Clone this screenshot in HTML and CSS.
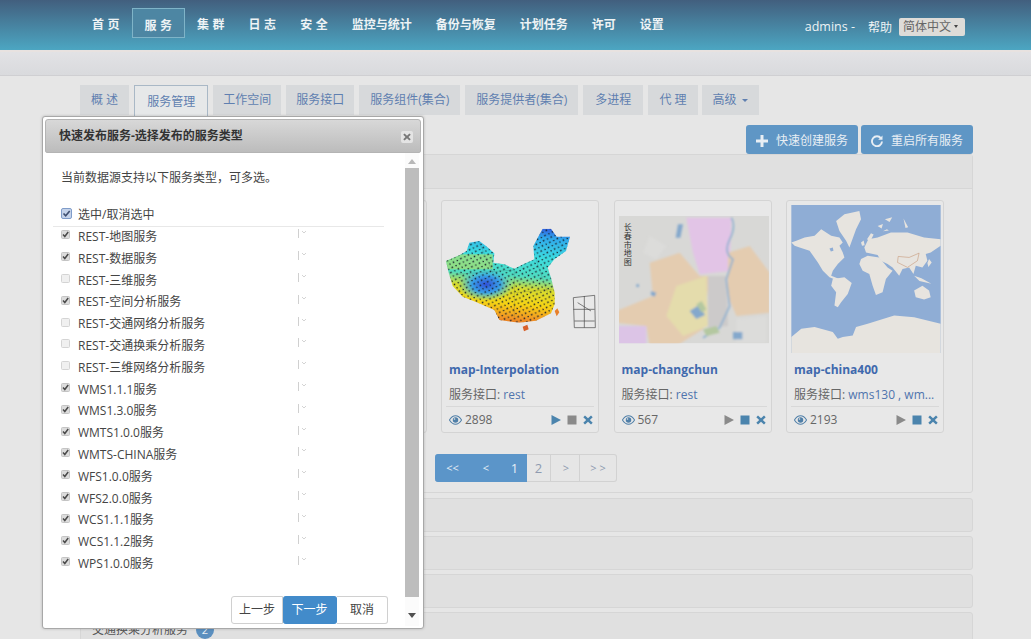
FILE: index.html
```html
<!DOCTYPE html>
<html lang="zh-CN">
<head>
<meta charset="utf-8">
<title>服务管理</title>
<link rel="stylesheet" href="styles.css">
</head>
<body>
<svg class="sprites" width="0" height="0">
  <defs>
    <symbol id="eye" viewBox="0 0 16 12"><path d="M.5 6C3 2 5.400.8 8 .8S13 2 15.500 6C13 10 10.600 11.200 8 11.200S3 10 .5 6z" fill="none" stroke="currentColor" stroke-width="1.300"/><circle cx="8" cy="6" r="3.400" fill="currentColor"/><circle cx="6.800" cy="4.800" r="1" fill="#e6e6e6"/></symbol>
    <symbol id="play" viewBox="0 0 10 10"><path d="M.5 0L10 5 .5 10z" fill="currentColor"/></symbol>
    <symbol id="stop" viewBox="0 0 10 10"><rect width="9" height="9" x=".5" y=".5" fill="currentColor"/></symbol>
    <symbol id="del" viewBox="0 0 10 10"><path d="M2 .5L5 3.300 8 .5 9.700 2.200 6.800 5 9.700 7.800 8 9.500 5 6.700 2 9.500.3 7.800 3.200 5 .3 2.200z" fill="currentColor"/></symbol>
    <symbol id="on" viewBox="0 0 9 9"><rect x=".5" y=".5" width="8" height="8" rx="1" fill="#dcdcdc" stroke="#c4c4c4"/><path d="M2 4.500l1.800 2L7.200 2" fill="none" stroke="#4a4a4a" stroke-width="1.500"/></symbol>
    <symbol id="off" viewBox="0 0 9 9"><rect x=".5" y=".5" width="8" height="8" rx="1" fill="#f0f0f0" stroke="#d4d4d4"/></symbol>
    <symbol id="mark" viewBox="0 0 10 9"><path d="M.5 0v9" stroke="#d0d0d0"/><path d="M4 2l2 2 2-2" fill="none" stroke="#d4d4d4"/></symbol>
    <pattern id="dots" width="19" height="16" patternUnits="userSpaceOnUse" patternTransform="rotate(14)"><circle cx="4" cy="4" r="2.500" fill="#18202a"/><circle cx="14" cy="12" r="2.300" fill="#18202a"/></pattern>
    <linearGradient id="heat" x1=".6" y1="0" x2=".5" y2="1"><stop offset="0" stop-color="#3058e0"/><stop offset=".1" stop-color="#30a8ec"/><stop offset=".3" stop-color="#3cdce0"/><stop offset=".5" stop-color="#50dcc0"/><stop offset=".62" stop-color="#d6dc30"/><stop offset=".78" stop-color="#f6d414"/><stop offset=".92" stop-color="#f29424"/><stop offset="1" stop-color="#e06a24"/></linearGradient>
    <radialGradient id="cold"><stop offset="0" stop-color="#3050d8"/><stop offset=".5" stop-color="#38a0e8"/><stop offset="1" stop-color="#40d8d8" stop-opacity="0"/></radialGradient>
    <clipPath id="cn"><path d="M30 195L70 178 92 165 100 140 130 135 150 150 175 172 172 200 205 205 235 218 262 205 295 190 292 150 305 125 320 98 345 98 362 122 402 122 390 165 355 190 335 215 345 245 356 290 356 325 345 352 300 374 250 380 190 372 175 342 120 318 80 302 50 270 38 230z"/></clipPath>
    <filter id="soft"><feGaussianBlur stdDeviation="3"/></filter>
  </defs>
</svg>

<header class="topbar">
  <nav class="mainnav">
    <a class="navitem">首 页</a>
    <a class="navitem navitem-on">服 务</a>
    <a class="navitem">集 群</a>
    <a class="navitem">日 志</a>
    <a class="navitem">安 全</a>
    <a class="navitem">监控与统计</a>
    <a class="navitem">备份与恢复</a>
    <a class="navitem">计划任务</a>
    <a class="navitem">许可</a>
    <a class="navitem">设置</a>
  </nav>
  <div class="usertools">
    <span class="username">admins -</span>
    <span class="help">帮助</span>
    <span class="langselect">简体中文<i class="langcaret"></i></span>
  </div>
</header>
<div class="subbar"></div>

<main class="content">
  <ul class="tabs">
    <li class="tab tab-spaced">概 述</li>
    <li class="tab tab-on">服务管理</li>
    <li class="tab">工作空间</li>
    <li class="tab">服务接口</li>
    <li class="tab tab-spaced">服务组件(集合)</li>
    <li class="tab tab-spaced">服务提供者(集合)</li>
    <li class="tab tab-roomy">多进程</li>
    <li class="tab tab-spaced">代 理</li>
    <li class="tab tab-last">高级<i class="tabcaret"></i></li>
  </ul>

  <div class="actions">
    <button class="actionbtn"><svg class="btnicon" viewBox="0 0 12 12"><path d="M4.500 0h3v4.500H12v3H7.500V12h-3V7.500H0v-3h4.500z" fill="currentColor"/></svg>快速创建服务</button>
    <button class="actionbtn"><svg class="btnicon" viewBox="0 0 12 12"><path d="M10 3.200A5 5 0 1 0 11 6.500" fill="none" stroke="currentColor" stroke-width="1.900"/><path d="M11.500.5v4.300H7.200z" fill="currentColor"/></svg>重启所有服务</button>
  </div>

  <section class="panel panel-open">
    <div class="panelhead"></div>
    <div class="panelbody">
      <div class="cards">
        <article class="card"></article>
        <article class="card"></article>
        <article class="card">
          <svg class="thumb" viewBox="30 27 450 444">
            <g clip-path="url(#cn)">
              <rect x="20" y="90" width="400" height="300" fill="url(#heat)"/>
              <rect x="20" y="175" width="150" height="45" fill="#c4e050" opacity=".55"/>
              <ellipse cx="150" cy="265" rx="85" ry="50" fill="url(#cold)"/>
              <rect x="20" y="90" width="400" height="300" fill="url(#dots)"/>
              <path d="M60 235L235 222V370M235 290L350 280M130 140L175 240M300 190L335 290" fill="none" stroke="#3a4a4a" stroke-width="1" opacity=".5"/>
            </g>
            <path d="M412 305L476 298 478 395H415zM412 340H476M445 300V395M415 375H476M425 320L465 345" fill="none" stroke="#444" stroke-width="2"/>
            <path d="M356 345l8-8 6 12-8 12z" fill="#e8802c"/>
            <path d="M260 392l14-6 4 14-14 6z" fill="#d8602a"/>
          </svg>
          <h3 class="cardtitle">map-Interpolation</h3>
          <p class="cardmeta">服务接口: <a class="metalink">rest</a></p>
          <div class="cardfoot">
            <svg class="eyeicon"><use href="#eye"/></svg><span class="count">2898</span>
            <span class="ops"><svg class="op op-blue"><use href="#play"/></svg><svg class="op op-grey"><use href="#stop"/></svg><svg class="op op-blue"><use href="#del"/></svg></span>
          </div>
        </article>
        <article class="card">
          <svg class="thumb" viewBox="548 27 450 444">
            <clipPath id="cc"><rect x="548" y="60" width="450" height="382"/></clipPath>
            <g clip-path="url(#cc)">
              <rect x="548" y="60" width="450" height="382" fill="#d8d8d6"/>
              <g filter="url(#soft)">
                <path d="M540 345L650 300 640 200 730 170 790 240 820 240 800 400 720 450H640L630 390 540 380z" fill="#e4ccb0"/>
                <path d="M720 270L810 240 815 390 740 420 690 360z" fill="#e4dcac"/>
                <path d="M750 65H885L880 225 790 235 770 170z" fill="#e2c4e6"/>
                <path d="M875 170L940 150 1000 230V350L900 360 875 300z" fill="#e4ccb0"/>
                <path d="M540 390H630V450H540z" fill="#dcc4e6"/>
                <path d="M815 240L870 240 875 390 815 395z" fill="#cccaca"/>
                <path d="M640 120l50 30-30 40-40-20zM900 370l90-10v80h-90z" fill="#dcdcda"/>
                <path d="M885 65Q900 90 880 130T890 190L870 250 880 330 850 395 800 425" fill="none" stroke="#8cb0d0" stroke-width="5"/>
                <path d="M725 85l15 0-8 40-14 0zM760 345l28-18 18 30-26 12zM890 408h28v22h-28zM645 285l15 5-5 12-12-5zM600 265l8 0 0 8-8 0z" fill="#84a8cc"/>
                <path d="M780 325l16-10 14 25-14 10zM800 400l40-10 10 20-40 10z" fill="#b4c8a0"/>
              </g>
              <text class="mapname" x="574" y="82">长春市地图</text>
            </g>
          </svg>
          <h3 class="cardtitle">map-changchun</h3>
          <p class="cardmeta">服务接口: <a class="metalink">rest</a></p>
          <div class="cardfoot">
            <svg class="eyeicon"><use href="#eye"/></svg><span class="count">567</span>
            <span class="ops"><svg class="op op-grey"><use href="#play"/></svg><svg class="op op-blue"><use href="#stop"/></svg><svg class="op op-blue"><use href="#del"/></svg></span>
          </div>
        </article>
        <article class="card">
          <svg class="thumb" viewBox="30 27 450 446">
            <rect x="30" y="27" width="450" height="446" fill="#8fadd5"/>
            <g fill="#e7e4df">
              <path d="M30 140L45 135 70 125 100 120 120 100 150 120 175 125 185 140 175 150 185 170 190 185 170 205 155 225 150 240 175 250 170 255 145 245 125 225 110 200 85 165 55 155 40 150z"/>
              <path d="M165 75L190 55 235 45 240 70 225 100 205 155 195 135 175 105z"/>
              <path d="M155 250L190 245 212 262 200 295 180 320 170 335 160 330 165 290 150 270z"/>
              <path d="M250 155L262 130 290 125 330 110 380 110 430 125 480 130V150L450 170 435 175 440 195 425 215 405 210 398 235 385 215 365 220 355 240 335 215 320 205 300 195 290 178 255 170z"/>
              <path d="M240 190L260 180 295 185 320 215 335 225 315 250 305 290 285 298 275 270 265 235 245 225 235 205z"/>
              <path d="M400 285L425 270 445 285 450 305 430 312 405 305z"/>
              <path d="M60 400L100 395 155 410 170 430 185 425 215 420 225 395 260 385 340 360 400 365 480 385V473H30V425z"/>
              <path d="M400 240l22 8 30 16-36-8zM445 190l8 10-10 14-3-12zM258 130l12-18 8 4-10 20zM240 140l8-6 3 14-8 2zM312 70l22-6-8 14zM368 68l14 26-8 2zM290 90l16-6-4 14zM318 100l-12 6 18-2z"/>
            </g>
            <path d="M145 158l10-3 2 10-8 2z" fill="#8fadd5"/>
            <path d="M352 182L385 185 415 172 410 195 380 215 350 200z" fill="none" stroke="#c08a66" stroke-width="1.500"/>
          </svg>
          <h3 class="cardtitle">map-china400</h3>
          <p class="cardmeta">服务接口: <a class="metalink">wms130 , wm...</a></p>
          <div class="cardfoot">
            <svg class="eyeicon"><use href="#eye"/></svg><span class="count">2193</span>
            <span class="ops"><svg class="op op-grey"><use href="#play"/></svg><svg class="op op-blue"><use href="#stop"/></svg><svg class="op op-blue"><use href="#del"/></svg></span>
          </div>
        </article>
      </div>
      <div class="pager">
        <span class="page page-on page-first">&lt;&lt;</span>
        <span class="page page-on page-prev">&lt;</span>
        <span class="page page-on page-num">1</span>
        <span class="page page-num">2</span>
        <span class="page page-next">&gt;</span>
        <span class="page page-last">&gt; &gt;</span>
      </div>
    </div>
  </section>
  <section class="panel panel-closed"></section>
  <section class="panel panel-closed"></section>
  <section class="panel panel-closed"></section>
  <section class="panel panel-closed panel-last"><span class="paneltitle">交通换乘分析服务</span><span class="badge">2</span></section>
</main>

<div class="modal">
  <div class="modalhead">
    <h2 class="modaltitle">快速发布服务-选择发布的服务类型</h2>
    <span class="modalclose"><svg class="closeicon"><use href="#del"/></svg></span>
  </div>
  <div class="modalmain">
    <div class="modalbody">
      <p class="intro">当前数据源支持以下服务类型，可多选。</p>
      <label class="checkall"><svg class="checkallbox" viewBox="0 0 11 11"><rect x=".5" y=".5" width="10" height="10" rx="1.500" fill="#c5d3ea" stroke="#7f9cc9"/><path d="M2.500 5.500l2.200 2.300L8.700 3" fill="none" stroke="#3f4f70" stroke-width="1.600"/></svg>选中/取消选中</label>
      <ul class="typelist">
        <li class="typerow"><svg class="box"><use href="#on"/></svg><span class="typename">REST-地图服务</span><svg class="mark"><use href="#mark"/></svg></li>
        <li class="typerow"><svg class="box"><use href="#on"/></svg><span class="typename">REST-数据服务</span><svg class="mark"><use href="#mark"/></svg></li>
        <li class="typerow"><svg class="box"><use href="#off"/></svg><span class="typename">REST-三维服务</span><svg class="mark"><use href="#mark"/></svg></li>
        <li class="typerow"><svg class="box"><use href="#on"/></svg><span class="typename">REST-空间分析服务</span><svg class="mark"><use href="#mark"/></svg></li>
        <li class="typerow"><svg class="box"><use href="#off"/></svg><span class="typename">REST-交通网络分析服务</span><svg class="mark"><use href="#mark"/></svg></li>
        <li class="typerow"><svg class="box"><use href="#off"/></svg><span class="typename">REST-交通换乘分析服务</span><svg class="mark"><use href="#mark"/></svg></li>
        <li class="typerow"><svg class="box"><use href="#off"/></svg><span class="typename">REST-三维网络分析服务</span><svg class="mark"><use href="#mark"/></svg></li>
        <li class="typerow"><svg class="box"><use href="#on"/></svg><span class="typename">WMS1.1.1服务</span><svg class="mark"><use href="#mark"/></svg></li>
        <li class="typerow"><svg class="box"><use href="#on"/></svg><span class="typename">WMS1.3.0服务</span><svg class="mark"><use href="#mark"/></svg></li>
        <li class="typerow"><svg class="box"><use href="#on"/></svg><span class="typename">WMTS1.0.0服务</span><svg class="mark"><use href="#mark"/></svg></li>
        <li class="typerow"><svg class="box"><use href="#on"/></svg><span class="typename">WMTS-CHINA服务</span><svg class="mark"><use href="#mark"/></svg></li>
        <li class="typerow"><svg class="box"><use href="#on"/></svg><span class="typename">WFS1.0.0服务</span><svg class="mark"><use href="#mark"/></svg></li>
        <li class="typerow"><svg class="box"><use href="#on"/></svg><span class="typename">WFS2.0.0服务</span><svg class="mark"><use href="#mark"/></svg></li>
        <li class="typerow"><svg class="box"><use href="#on"/></svg><span class="typename">WCS1.1.1服务</span><svg class="mark"><use href="#mark"/></svg></li>
        <li class="typerow"><svg class="box"><use href="#on"/></svg><span class="typename">WCS1.1.2服务</span><svg class="mark"><use href="#mark"/></svg></li>
        <li class="typerow"><svg class="box"><use href="#on"/></svg><span class="typename">WPS1.0.0服务</span><svg class="mark"><use href="#mark"/></svg></li>
      </ul>
      <div class="modalfoot">
        <button class="stepbtn">上一步</button>
        <button class="stepbtn stepbtn-on">下一步</button>
        <button class="stepbtn stepbtn-end">取消</button>
      </div>
    </div>
    <div class="scroller">
      <i class="arrowup"></i>
      <div class="scrollthumb"></div>
      <i class="arrowdown"></i>
    </div>
  </div>
</div>
</body>
</html>
```

FILE: styles.css
```css
* { box-sizing: border-box; }
html, body { height: 100%; }
body {
  margin: 0;
  overflow: hidden;
  background: #e6e6e6;
  color: #555;
  font: 12px/1.4 "Open Sans", "Noto Sans CJK SC", sans-serif;
  position: relative;
}
.sprites { position: absolute; }
ul { list-style: none; margin: 0; padding: 0; }
h2, h3, p { margin: 0; }

.topbar {
  height: 50px;
  display: flex;
  align-items: center;
  justify-content: space-between;
  padding: 0 66px 0 80px;
  background: linear-gradient(#425f7e, #4ca6c2);
}
.mainnav { display: flex; align-items: center; padding-bottom: 4px; }
.navitem {
  height: 30px;
  padding: 0 12px;
  border: 1px solid transparent;
  border-width: 1px 0;
  color: #eef3f5;
  font-weight: 700;
  line-height: 32px;
  white-space: nowrap;
  word-spacing: .4px;
}
.navitem-on {
  border: 1px solid #7fb4c8;
  background: #4d86a3;
  line-height: 34px;
}
.usertools { display: flex; align-items: center; padding-top: 4px; color: #eef3f5; }
.username { font-size: 12.500px; margin-right: 13px; }
.help { margin-right: 7px; padding-top: 2px; }
.langselect {
  width: 66px;
  height: 18px;
  display: flex;
  align-items: center;
  padding-left: 4px;
  border-radius: 2px;
  background: #dedcd8;
  color: #666;
  line-height: 18px;
}
.langcaret {
  margin-left: 3px;
  border: 2px solid transparent;
  border-top: 3px solid #444;
  border-bottom: 0;
}

.subbar {
  height: 26px;
  border-top: 2px solid #e8e2e0;
  border-bottom: 1px solid #cfcfd2;
  background: linear-gradient(#e2e2e5, #d9dadd);
}

.content { padding: 9px 58px 0 80px; }
.tabs { display: flex; gap: 5px; height: 30px; }
.tab {
  height: 30px;
  padding: 0 10px;
  background: #d7d9db;
  color: #5f7fb0;
  line-height: 30px;
  white-space: nowrap;
}
.tab-spaced { padding: 0 11px; }
.tab-roomy { padding: 0 12px; }
.tab-last { padding: 0 11px; margin-left: -1px; }
.tab-on {
  height: 32px;
  padding: 1px 12px 0;
  border: 1px solid #a9b8c6;
  border-bottom: 0;
  background: #e6e8e9;
}
.tabcaret {
  display: inline-block;
  margin-left: 5px;
  vertical-align: 2px;
  border: 3px solid transparent;
  border-top: 3px solid #5f7fb0;
  border-bottom: 0;
}

.actions { display: flex; justify-content: flex-end; gap: 3px; margin-top: 10px; height: 29px; }
.actionbtn {
  width: 112px;
  height: 29px;
  padding: 3px 0 0;
  display: flex;
  align-items: center;
  justify-content: center;
  border: 0;
  border-radius: 3px;
  background: #5f96c5;
  color: #e8eef4;
  font: inherit;
}
.btnicon { width: 12px; height: 12px; margin-right: 8px; margin-top: -1px; }

.panel { border: 1px solid #d6d6d6; border-radius: 3px; margin-bottom: 4px; }
.panel-open { height: 339px; margin-bottom: 5px; }
.panelhead { height: 34px; border-bottom: 1px solid #d6d6d6; background: #e0e0e0; }
.panelbody { padding: 11px 0 0 15px; }
.cards { display: flex; gap: 14.500px; height: 233px; }
.card {
  flex: none;
  width: 158px;
  height: 233px;
  padding: 4px 4px 0;
  border: 1px solid #d4d4d4;
  border-radius: 3px;
  background: #e8e8e8;
}
.thumb { display: block; width: 150px; height: 148px; }
.mapname {
  fill: #333;
  font-size: 24px;
  writing-mode: vertical-rl;
  letter-spacing: 2px;
}
.cardtitle {
  margin: 8px 0 0 3px;
  color: #3f69ad;
  font-size: 12px;
  font-weight: 700;
  line-height: 17px;
}
.cardmeta {
  margin: 8px 0 0 3px;
  color: #666;
  line-height: 17px;
  white-space: nowrap;
}
.metalink { color: #4f74ad; }
.cardfoot {
  display: flex;
  align-items: center;
  height: 26px;
  margin-top: 3px;
  padding: 0 0 0 3px;
  border-top: 1px solid #d8d8d8;
  color: #666;
}
.eyeicon { width: 13px; height: 10px; margin-right: 3px; color: #4f7fa8; }
.count { padding-top: 2px; }
.ops { display: flex; gap: 6px; margin-left: auto; padding-right: 1px; }
.op { width: 10px; height: 10px; }
.op-blue { color: #4b84ad; }
.op-grey { color: #8a8a8a; }

.pager {
  display: flex;
  justify-content: center;
  height: 28px;
  margin: 21px 0 0 -16px;
}
.page {
  height: 28px;
  border: 1px solid #d2d2d2;
  border-left: 0;
  color: #8f9bb0;
  line-height: 26px;
  text-align: center;
  font-size: 11px;
}
.page-on { border-color: #5b95c9; background: #5b95c9; color: #e6eef6; }
.page-first { width: 33px; padding-left: 3px; border-radius: 3px 0 0 3px; }
.page-prev { width: 35px; padding-left: 2px; }
.page-num { width: 24px; font-size: 13px; }
.page-next { width: 29px; padding-left: 2px; }
.page-last { width: 37px; border-radius: 0 3px 3px 0; }

.panel-closed { height: 34px; background: #e0e0e0; padding: 8px 0 0 11px; }
.panel-last { height: 40px; }
.paneltitle { color: #555; font-size: 12px; }
.badge {
  display: inline-block;
  width: 18px;
  height: 18px;
  margin-left: 8px;
  border-radius: 9px;
  background: #5b8fbf;
  color: #e8eef4;
  font-size: 11px;
  line-height: 18px;
  text-align: center;
}

.modal {
  position: absolute;
  left: 42px;
  top: 116px;
  width: 382px;
  height: 513px;
  display: flex;
  flex-direction: column;
  padding: 2px;
  border: 1px solid #a8a8a8;
  border-radius: 3px;
  background: #fff;
  box-shadow: 0 0 3px rgba(0, 0, 0, .2);
}
.modalhead {
  flex: none;
  height: 34px;
  display: flex;
  align-items: center;
  justify-content: space-between;
  padding: 1px 7px 0 13px;
  border: 1px solid #b4b4b4;
  border-radius: 3px 3px 2px 2px;
  background: linear-gradient(#d8d8d8, #bcbcbc);
}
.modaltitle { color: #333; font-size: 12px; font-weight: 700; }
.modalclose {
  width: 12px;
  height: 12px;
  display: flex;
  align-items: center;
  justify-content: center;
  border-radius: 2px;
  background: #e4e4e4;
}
.closeicon { width: 8px; height: 8px; color: #777; }
.modalmain { flex: 1; display: flex; padding-right: 2px; min-height: 0; }
.modalbody {
  flex: 1;
  min-width: 0;
  display: flex;
  flex-direction: column;
  padding: 0 21px 2px 8px;
  color: #444;
}
.intro { margin: 16px 0 0 8px; line-height: 17px; }
.checkall {
  display: flex;
  align-items: center;
  height: 25px;
  margin-top: 16px;
  padding: 2px 0 0 8px;
  border-bottom: 1px solid #e8e8e8;
  color: #444;
}
.checkallbox { width: 11px; height: 11px; margin-right: 6px; margin-top: -4px; }
.typelist { display: block; margin-top: -1px; }
.typerow {
  display: flex;
  align-items: center;
  height: 21.800px;
  padding-left: 8px;
}
.box { width: 9px; height: 9px; margin-right: 8px; margin-top: -4px; flex: none; }
.typename { width: 220px; flex: none; padding-top: 1px; }
.mark { width: 10px; height: 9px; margin-top: -6px; }
.modalfoot { display: flex; justify-content: flex-end; margin-top: auto; margin-right: -4px; }
.stepbtn {
  width: 52px;
  height: 28px;
  padding: 0;
  border: 1px solid #d0d0d0;
  border-left: 0;
  background: #fff;
  color: #444;
  font: inherit;
}
.stepbtn:first-child { border-left: 1px solid #d0d0d0; border-radius: 3px 0 0 3px; }
.stepbtn-end { width: 51px; border-radius: 0 3px 3px 0; }
.stepbtn-on { width: 54px; border-color: #428bca; border-radius: 3px; background: #428bca; color: #fff; }
.scroller {
  flex: none;
  width: 14px;
  display: flex;
  flex-direction: column;
  align-items: center;
  background: #fbfbfb;
}
.arrowup, .arrowdown { flex: none; width: 0; height: 0; border: 4px solid transparent; }
.arrowup { margin: 6px 0 4px; border-top: 0; border-bottom: 5px solid #b8b8b8; }
.arrowdown { margin-top: 16px; border-bottom: 0; border-top: 5px solid #505050; }
.scrollthumb { flex: none; width: 14px; height: 429px; background: #bdbdbd; }
```
